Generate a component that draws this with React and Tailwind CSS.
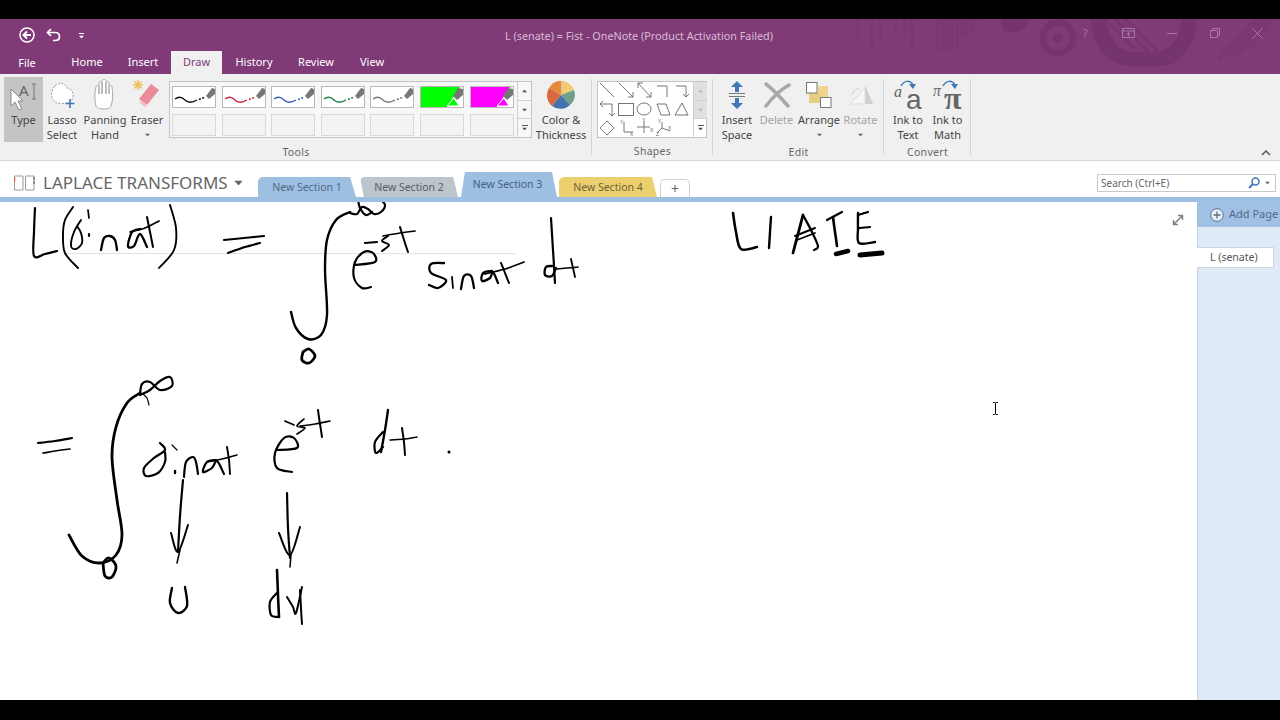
import React from "react";

const smooth = (p) => {
  let d = `M${p[0][0]} ${p[0][1]}`;
  for (let i = 0; i < p.length - 1; i++) {
    const a = p[i - 1] || p[i], b = p[i], c = p[i + 1], e = p[i + 2] || c;
    d += `C${(b[0] + (c[0] - a[0]) / 6).toFixed(1)} ${(b[1] + (c[1] - a[1]) / 6).toFixed(1)} ${(c[0] - (e[0] - b[0]) / 6).toFixed(1)} ${(c[1] - (e[1] - b[1]) / 6).toFixed(1)} ${c[0]} ${c[1]}`;
  }
  return d;
};

const strokes = [
  // L(sin at)
  [2.2, [[35,208],[34,232],[34,256],[45,254],[57,251]]],
  [1.9, [[73,207],[65,220],[63,235],[65,253],[78,268]]],
  [1.9, [[81,220],[74,232],[71,246],[76,249],[82,243],[81,233],[77,226]]],
  [1.7, [[88,210],[89,218]]], [2.2, [[89,234],[89,236]]],
  [2.3, [[101,250],[104,238],[110,236],[115,240],[117,250]]],
  [2.3, [[140,229],[132,232],[128,246],[134,246],[140,234],[147,247]]],
  [2, [[147,217],[150,232],[153,247]]], [1.7, [[130,232],[145,228],[159,221]]],
  [1.9, [[170,205],[176,228],[174,250],[159,268]]],
  [2.2, [[224,240],[244,238],[264,236]]], [2.2, [[228,253],[245,247],[260,243]]],
  // integral 1
  [2.4, [[350,212],[336,220],[327,240],[325,270],[327,315],[321,335],[308,339],[296,328],[291,312]]],
  [2.2, [[350,213],[357,214],[362,207],[368,209],[374,214],[381,212],[385,205],[380,199]]],
  [2.2, [[358,200],[360,208],[366,215],[372,212]]],
  [2.8, [[303,352],[309,349],[315,356],[309,363],[302,360],[303,352]]],
  // e -st
  [2.2, [[354,265],[375,262],[373,253],[364,252],[355,262],[354,278],[362,288],[371,287]]],
  [2.2, [[365,243],[377,242]]],
  [2, [[388,236],[382,241],[389,245],[382,251]]],
  [2, [[400,227],[404,240],[408,252]]], [1.7, [[383,236],[400,233],[415,231]]],
  // sin at
  [2.3, [[444,263],[431,264],[431,273],[446,280],[438,288],[429,285]]],
  [1.8, [[452,277],[453,288]]],
  [2.3, [[461,289],[464,276],[471,276],[474,288]]],
  [2.3, [[492,271],[483,273],[482,281],[490,278],[493,272],[498,283]]],
  [2, [[501,263],[505,273],[509,283]]], [1.7, [[484,274],[505,269],[524,262]]],
  // dt
  [2.2, [[551,218],[553,250],[555,283]]],
  [2.3, [[553,266],[546,267],[545,275],[552,276],[556,268]]],
  [1.8, [[571,259],[573,268],[575,277]]], [1.6, [[557,269],[567,268],[578,267]]],
  // LIATE
  [2.6, [[733,213],[736,232],[741,249],[757,247]]],
  [2.4, [[771,217],[770,232],[769,248]]],
  [2.8, [[803,215],[798,234],[793,253]]], [2.2, [[803,215],[811,230],[818,246],[814,250]]], [1.9, [[795,236],[815,228]]], [1.7, [[797,240],[815,233]]],
  [2.2, [[827,220],[842,212]]], [2.6, [[833,217],[835,232],[837,246]]],
  [4.5, [[836,254],[848,251]]],
  [2.4, [[858,213],[858,228],[859,243],[875,242]]], [2.2, [[858,215],[868,212]]], [2.2, [[859,228],[870,227]]],
  [5, [[860,255],[882,253]]],
  // second row =
  [2.2, [[38,443],[55,441],[72,438]]], [1.7, [[43,453],[55,451],[70,449]]],
  // integral 2
  [2.8, [[140,393],[127,403],[116,427],[112,457],[117,500],[122,535],[116,555],[100,563],[82,556],[69,535]]],
  [2.2, [[140,395],[142,384],[150,382],[160,390],[172,386],[170,377],[160,381],[150,390],[140,395]]],
  [1.2, [[143,394],[147,398],[149,405]]],
  [2.8, [[103,563],[109,558],[116,566],[112,577],[105,576],[103,563]]],
  // S in at
  [2.2, [[160,443],[165,450],[154,458],[144,468],[146,476],[158,473],[165,462],[165,452]]],
  [1.2, [[172,445],[177,450]]], [2.4, [[175,471],[175,473]]],
  [2.2, [[184,477],[186,462],[193,457],[196,462],[198,474]]],
  [2.2, [[216,460],[207,462],[203,472],[212,468],[217,461],[224,474]]],
  [1.9, [[227,447],[229,460],[230,474]]], [1.5, [[207,462],[222,459],[237,455]]],
  // arrow 1
  [2.2, [[183,480],[180,516],[178,552]]], [2, [[171,533],[178,552],[188,525]]], [1.5, [[180,550],[177,563]]],
  // e -st 2
  [2.2, [[277,450],[297,448],[294,438],[284,438],[275,453],[277,468],[292,472]]],
  [1.7, [[285,421],[294,425]]],
  [1.7, [[304,419],[297,426],[305,428],[297,434]]],
  [2, [[318,410],[320,424],[322,437]]], [1.6, [[300,426],[315,424],[330,421]]],
  // dt 2
  [2.4, [[388,410],[385,430],[381,452]]],
  [2.2, [[383,432],[375,442],[376,453],[383,447]]],
  [2, [[402,428],[404,442],[405,455]]], [1.5, [[390,440],[405,439],[417,437]]],
  // arrow 2
  [2.2, [[287,493],[288,528],[290,558]]], [2, [[279,533],[290,555],[300,527]]], [1.5, [[291,555],[290,567]]],
  // u dv
  [2.4, [[172,588],[170,603],[178,613],[187,606],[185,587]]],
  [2.6, [[277,570],[278,595],[279,617]]],
  [2.2, [[277,593],[270,602],[271,615],[278,617]]],
  [2, [[287,597],[293,607],[296,613],[302,587]]],
  [2, [[300,590],[301,608],[302,624]]],
];

const Caret = ({ className = "" }) => <svg width="7" height="4" viewBox="0 0 7 4" className={className}><path d="M0 0h7L3.5 4z" fill="currentColor" /></svg>;

const Big = ({ w, icon, lines, caret, dim, active }) => (
  <div className={`flex flex-col items-center h-[65px] shrink-0 ${active ? "bg-[#c4c4c4]" : ""} ${dim ? "text-[#a4a4a4]" : "text-[#444444]"}`} style={{ width: w }}>
    <div className="h-[35px] w-full flex items-center justify-center">{icon}</div>
    {lines.map((l) => <div key={l} className="text-[11px] leading-[15px] whitespace-nowrap">{l}</div>)}
    {caret && <Caret className="mt-[6px] scale-75 text-[#666666]" />}
  </div>
);

const Group = ({ w, label, children }) => (
  <div className="relative flex flex-col h-full shrink-0" style={{ width: w }}>
    <div className="flex pt-[3px] h-[70px]">{children}</div>
    <div className="flex-1 flex items-center justify-center text-[10.5px] text-[#666666] tracking-[0.3px] pt-[3px]">{label}</div>
    <div className="absolute right-0 top-[5px] bottom-[5px] w-px bg-[#d4d4d4]" />
  </div>
);

const Pen = ({ c }) => (
  <div className="w-[44px] h-[22px] bg-white border border-[#b8b8b8]">
    <svg width="42" height="20" viewBox="0 0 42 20">
      <path d="M2 12c4-3 7-2 10 1s7 3 12 0" fill="none" stroke={c} strokeWidth="1.4" />
      <path d="M26 12.5l5-2" stroke={c} strokeWidth="1.6" strokeDasharray="2 1.5" />
      <path d="M33 9l6-8 3 1v5l-6 5z" fill="#777777" />
    </svg>
  </div>
);
const High = ({ c }) => (
  <div className="w-[44px] h-[22px] bg-white border border-[#b8b8b8]">
    <svg width="42" height="20" viewBox="0 0 42 20">
      <path d="M0 0h39L26 20H0z" fill={c} />
      <path d="M26 19l7-8 5 8z" fill={c} stroke="#ffffff" strokeWidth="1" />
      <path d="M32 9l5-8 5 1v6l-6 5z" fill="#777777" />
    </svg>
  </div>
);
const Empty = () => <div className="w-[44px] h-[22px] bg-[#f3f3f3] border border-[#d8d8d8]" />;

const Scroll = ({ dim }) => (
  <div className="w-[14px] h-full border-l border-[#d0d0d0] flex flex-col shrink-0">
    <div className={`flex-1 flex items-center justify-center ${dim ? "bg-[#e0e0e0] text-[#bbbbbb]" : "text-[#555555]"}`}><Caret className="rotate-180 scale-75" /></div>
    <div className={`flex-1 flex items-center justify-center border-t border-[#d0d0d0] ${dim ? "bg-[#e0e0e0] text-[#bbbbbb]" : "text-[#555555]"}`}><Caret className="scale-75" /></div>
    <div className="flex-1 flex flex-col gap-[1px] items-center justify-center border-t border-[#d0d0d0] text-[#555555]"><div className="w-[6px] h-px bg-[#555555]" /><Caret className="scale-75" /></div>
  </div>
);

const Shapes = () => (
  <svg width="95" height="55" viewBox="598 82 95 55" fill="none" stroke="#666666" strokeWidth="0.9">
    <path d="M600 83l14 14" />
    <path d="M619 83l14 14M633 97v-5M633 97h-5" />
    <path d="M638 83l13 14M638 83v5M638 83h5M651 97v-5M651 97h-5" />
    <path d="M657 86h10v11" />
    <path d="M676 86h10v11M686 97l-3-3M686 97l3-3" />
    <path d="M600 104h12v12M600 104l3-3M600 104l3 3M612 116l-3-3M612 116l3-3" />
    <rect x="618.5" y="103.5" width="15" height="12" />
    <ellipse cx="644" cy="109" rx="7" ry="6" />
    <path d="M657 104h9l4 11h-9z" />
    <path d="M675 115l7-12 6 12z" />
    <path d="M607 121l7 7-7 7-7-7z" />
    <path d="M624 122v10h9" />
    <path d="M644 121v12M637 127h13" />
    <path d="M662 122v6l-5 5M662 128l8 3" />
    <g fill="#666666" stroke="none" fontSize="5" fontFamily="Liberation Sans">
      <text x="620" y="124">Y</text><text x="630" y="136">X</text>
      <text x="642" y="122">Y</text><text x="650" y="132">X</text>
      <text x="658" y="123">Y</text><text x="668" y="130">X</text><text x="656" y="136">Z</text>
    </g>
  </svg>
);

const Decor = () => (
  <svg className="absolute inset-0" width="1280" height="55" viewBox="0 19 1280 55" fill="none" stroke="#7a3772">
    <g strokeWidth="3">
      <path d="M858 19v18M872 19v28M880 19v22M896 19v14M905 19v18M912 19v28M938 19v33M943 19v33M948 19v33M952 19v30M957 19v26M962 19v20M966 19v16M972 19v12M976 19v10" />
    </g>
    <circle cx="1058" cy="38" r="15" strokeWidth="7" stroke="#75346f" />
    <circle cx="1058" cy="38" r="5" fill="#75346f" stroke="none" />
    <path d="M1001 19c0 14 5 13 13 13s14-5 14-13z" fill="#75346f" stroke="none" />
    <path d="M1091 19c1 25 14 47 40 47h30c20 0 34-20 36-47h-15c-2 18-10 33-28 33h-20c-16 0-26-16-28-33z" fill="#75346f" stroke="none" />
    <path d="M1115 19l34 33M1125 19l34 33M1105 19l30 30" strokeWidth="2" stroke="#75346f" />
    <path d="M1218 60l38-41M1228 58l32-39M1238 54l28-35M1248 50l24-31" strokeWidth="3.5" />
  </svg>
);

export default function App() {
  const tabs = [["Home", 56], ["Insert", 56]];
  const tabs2 = [["History", 64], ["Review", 60], ["View", 52]];
  return (
    <div className="w-[1280px] h-[720px] bg-black flex flex-col overflow-hidden [font-family:'Noto_Sans',sans-serif]">
      <div className="h-[19px] shrink-0 bg-black" />
      {/* title bar */}
      <div className="relative h-[55px] shrink-0 bg-[#803a78] overflow-hidden">
        <Decor />
        <div className="relative h-[32px] flex items-center">
          <svg className="ml-[19px]" width="16" height="16" viewBox="0 0 16 16" fill="none" stroke="#ffffff" strokeWidth="1.5">
            <circle cx="8" cy="8" r="7" />
            <path d="M12 8H5M8 4.5L4.5 8 8 11.5" strokeWidth="2" />
          </svg>
          <svg className="ml-[11px]" width="15" height="14" viewBox="0 0 15 14" fill="none" stroke="#ffffff" strokeWidth="1.7">
            <path d="M5 1L1.5 4.5 5 8" /><path d="M2 4.5h7c6 0 6 8 0 8H7" />
          </svg>
          <div className="ml-[17px] mt-[2px] flex flex-col items-center gap-[1px] text-white"><div className="w-[5px] h-px bg-white" /><Caret className="scale-75" /></div>
          <div className="absolute left-0 right-[2px] top-[11px] text-center text-[10.8px] leading-[12px] text-[#d8bcd5]">L (senate) = Fist - OneNote (Product Activation Failed)</div>
          <div className="absolute top-[7px] left-[1064px] flex items-center text-[#a678a1]">
            <div className="w-[43px] text-center text-[11px] leading-[14px]">?</div>
            <div className="w-[43px] flex justify-center"><svg width="13" height="10" viewBox="0 0 13 10" fill="none" stroke="currentColor"><path d="M.5.5h12v9H.5zM.5 3h12M6.5 8V4.5M5 6l1.5-1.5L8 6" /></svg></div>
            <div className="w-[43px] flex justify-center"><div className="w-[10px] h-px bg-current" /></div>
            <div className="w-[43px] flex justify-center"><svg width="10" height="10" viewBox="0 0 10 10" fill="none" stroke="currentColor"><path d="M2.5 2.5V.5h7v7h-2M.5 2.5h7v7h-7z" /></svg></div>
            <div className="w-[43px] flex justify-center"><svg width="11" height="11" viewBox="0 0 11 11" stroke="currentColor"><path d="M.5.5l10 10M10.5.5l-10 10" /></svg></div>
          </div>
        </div>
        <div className="relative h-[23px] flex text-[11px] text-white">
          <div className="w-[54px] flex items-center justify-center mt-[1px]">File</div>
          <div className="w-[5px]" />
          {tabs.map(([t, w]) => <div key={t} className="flex items-center justify-center" style={{ width: w }}>{t}</div>)}
          <div className="w-[51px] bg-[#f0f0f0] text-[#803a78] flex items-center justify-center">Draw</div>
          {tabs2.map(([t, w]) => <div key={t} className="flex items-center justify-center" style={{ width: w }}>{t}</div>)}
        </div>
      </div>
      {/* ribbon */}
      <div className="relative h-[87px] shrink-0 bg-[#f0f0f0] border-b border-[#d6d6d6] flex">
        <Group w={592} label="Tools">
          <div className="w-[4px] shrink-0" />
          <Big w={39} active lines={["Type"]} icon={
            <svg width="39" height="35" viewBox="0 0 39 35">
              <text x="15" y="19" fontSize="15" fill="#666666" fontFamily="Noto Sans">A</text>
              <path d="M28 7h4M30 7v15M28 22h4" stroke="#777777" fill="none" />
              <path d="M7 12v17l4-4 4 8 3-1-4-8h5z" fill="#ffffff" stroke="#8a8a8a" />
            </svg>} />
          <Big w={38} lines={["Lasso", "Select"]} icon={
            <svg width="30" height="30" viewBox="0 0 30 30" fill="none">
              <path d="M8 6c5-5 11-2 12 2 6 1 8 8 4 13-3 3-10 3-14 2-7-3-7-12-2-17z" fill="#ffffff" stroke="#999999" strokeDasharray="2 1.5" />
              <path d="M23 19v9M18.5 23.500h9" stroke="#3f78b8" strokeWidth="1.6" />
            </svg>} />
          <Big w={48} lines={["Panning", "Hand"]} icon={
            <svg width="24" height="32" viewBox="0 0 24 32" fill="#ffffff" stroke="#a8a8a8">
              <path d="M3 27C1 20 2 11 3 8c0-2 3-2 3 0v7-11c0-2 3-2 3 0v11V2c0-2 4-2 4 0v13-11c0-2 3-2 3 0v11-7c0-2 3-2 3 0 1 6 1 14-1 19-1 2-2 3-7 3s-7-1-8-3z" />
            </svg>} />
          <Big w={36} caret lines={["Eraser"]} icon={
            <svg width="30" height="32" viewBox="0 0 30 32">
              <path d="M6 1v10M1 6h10M2.500 2.500l7 7M9.500 2.500l-7 7" stroke="#ecc45a" strokeWidth="1.5" />
              <circle cx="6" cy="6" r="2.600" fill="#ecc45a" />
              <path d="M19 5l8 6-12 15-8-6z" fill="#ea8a9a" />
              <path d="M9 22l6 5-2 1-6-5z" fill="#f1b5c0" />
            </svg>} />
          <div className="w-[4px] shrink-0" />
          <div className="w-[363px] h-[57px] mt-[4px] border border-[#c4c4c4] bg-[#f7f7f7] flex shrink-0">
            <div className="flex-1 grid grid-cols-[repeat(7,44px)] gap-x-[5.600px] gap-y-[6px] pl-[2px] pt-[4px] content-start">
              <Pen c="#111111" /><Pen c="#c8283c" /><Pen c="#3a5fb0" /><Pen c="#1f8048" /><Pen c="#777777" /><High c="#00ff00" /><High c="#ff00ff" />
              <Empty /><Empty /><Empty /><Empty /><Empty /><Empty /><Empty />
            </div>
            <Scroll />
          </div>
          <Big w={58} lines={["Color &", "Thickness"]} icon={
            <svg width="30" height="30" viewBox="0 0 30 30">
              <path d="M15 15V1h-2A14 14 0 0 0 3 8z" fill="#e58a3d" />
              <path d="M15 15V1h3l-1 14z" fill="#f0b8a0" />
              <path d="M15 15l2-14a14 14 0 0 1 11 9z" fill="#eecb74" />
              <path d="M15 15l13-5a14 14 0 0 1-4 15z" fill="#6fa08c" />
              <path d="M15 15l9 10a14 14 0 0 1-18 1z" fill="#4472ad" />
              <path d="M15 15l-9 11A14 14 0 0 1 3 8z" fill="#d8683e" />
            </svg>} />
        </Group>
        <Group w={121} label="Shapes">
          <div className="w-[5px] shrink-0" />
          <div className="w-[110px] h-[57px] mt-[4px] border border-[#c4c4c4] bg-white flex shrink-0">
            <div className="flex-1"><Shapes /></div>
            <Scroll dim />
          </div>
        </Group>
        <Group w={171} label="Edit">
          <div className="w-[4px] shrink-0" />
          <Big w={40} lines={["Insert", "Space"]} icon={
            <svg width="18" height="30" viewBox="0 0 18 30" fill="#3f78b8">
              <path d="M9 1l6 6h-4v5H7V7H3z" /><path d="M9 29l-6-6h4v-5h4v5h4z" />
              <path d="M1 13.500h16M1 16.500h16" stroke="#777777" />
            </svg>} />
          <Big w={39} dim lines={["Delete"]} icon={
            <svg width="28" height="26" viewBox="0 0 28 26" fill="none" stroke="#a8a8a8" strokeWidth="3.500" strokeLinecap="round">
              <path d="M3 2c8 6 15 14 22 22" /><path d="M26 3C17 8 9 16 3 24" />
            </svg>} />
          <Big w={46} caret lines={["Arrange"]} icon={
            <svg width="28" height="28" viewBox="0 0 28 28">
              <rect x="13" y="5" width="10" height="11" fill="#f0d58c" />
              <rect x="4" y="12" width="11" height="10" fill="#e8cc80" />
              <rect x="1.500" y="1.500" width="10.500" height="10.500" fill="#ffffff" stroke="#777777" />
              <rect x="15.500" y="16.500" width="10.500" height="10" fill="#ffffff" stroke="#777777" />
            </svg>} />
          <Big w={37} dim caret lines={["Rotate"]} icon={
            <svg width="26" height="22" viewBox="0 0 26 22" fill="none">
              <path d="M17 1l8 19h-8z" fill="#cfcfcf" /><path d="M2 20h15V4z" stroke="#dddddd" fill="#f6f6f6" />
              <path d="M4 11c1-5 5-7 8-6" stroke="#dddddd" strokeWidth="1.500" />
            </svg>} />
        </Group>
        <Group w={87} label="Convert">
          <div className="w-[4px] shrink-0" />
          <Big w={40} lines={["Ink to", "Text"]} icon={
            <svg className="overflow-visible" width="30" height="34" viewBox="0 0 30 34">
              <path d="M8 8c3-6 9-6 12-1" fill="none" stroke="#3f78b8" strokeWidth="1.500" /><path d="M16 6l7 0-3 5z" fill="#3f78b8" />
              <text x="1" y="19" fontSize="16" fontStyle="italic" fill="#666666" fontFamily="Liberation Serif">a</text>
              <text x="13" y="31" fontSize="28" fill="#666666" fontFamily="Liberation Sans">a</text>
            </svg>} />
          <Big w={39} lines={["Ink to", "Math"]} icon={
            <svg className="overflow-visible" width="32" height="34" viewBox="0 0 32 34">
              <path d="M11 8c3-6 9-6 12-1" fill="none" stroke="#3f78b8" strokeWidth="1.500" /><path d="M19 6l7 0-3 5z" fill="#3f78b8" />
              <text x="1" y="18" fontSize="16" fontStyle="italic" fill="#666666" fontFamily="Liberation Serif">π</text>
              <text x="12" y="31" fontSize="32" fontWeight="700" fill="#666666" fontFamily="Liberation Serif">π</text>
            </svg>} />
        </Group>
        <svg className="absolute right-[9px] bottom-[4px]" width="10" height="6" viewBox="0 0 10 6" fill="none" stroke="#555555" strokeWidth="1.500"><path d="M1 5l4-4 4 4" /></svg>
      </div>
      {/* notebook row */}
      <div className="h-[36px] shrink-0 bg-white flex items-end">
        <div className="w-[258px] h-full flex items-center shrink-0 pl-[14px] pt-[8px] text-[#666666]">
          <svg className="shrink-0" width="21" height="16" viewBox="0 0 21 16" fill="none" stroke="#9a9a9a">
            <path d="M.5 1h8.500v14H.5zM11.500 1H20v14h-8.500z" />
            <path d="M.5 2v5" stroke="#d8683e" strokeWidth="1.500" /><path d="M20 2v3M20 6v3" stroke="#555555" />
          </svg>
          <span className="ml-[8px] text-[17px] leading-[20px] whitespace-nowrap">LAPLACE TRANSFORMS</span>
          <Caret className="ml-[7px] shrink-0 scale-125" />
        </div>
        <div className="w-[98px] h-[20px] rounded-t-[5px] bg-[#9dbfe2] text-[#4f6a86] text-[10.500px] pt-[1px] flex items-center justify-center [clip-path:polygon(0_100%,0_0,94%_0,100%_100%)]">New Section 1</div>
        <div className="w-[4px]" />
        <div className="w-[98px] h-[20px] rounded-t-[5px] bg-[#bcc5c9] text-[#55606a] text-[10.500px] pt-[1px] flex items-center justify-center [clip-path:polygon(0_0,95%_0,100%_100%,4%_100%)]">New Section 2</div>
        <div className="w-[99px] h-[25px] rounded-t-[5px] bg-[#9dbfe2] text-[#47627e] text-[10.500px] flex items-center justify-center [clip-path:polygon(3%_100%,7%_0,95%_0,100%_100%)]">New Section 3</div>
        <div className="w-[2px]" />
        <div className="w-[98px] h-[20px] rounded-t-[5px] bg-[#ecd06f] text-[#6e6238] text-[10.500px] pt-[1px] flex items-center justify-center [clip-path:polygon(0_0,95%_0,100%_100%,0_100%)]">New Section 4</div>
        <div className="w-[3px]" />
        <div className="w-[30px] h-[18px] rounded-t-[5px] border border-b-0 border-[#d0d0d0] text-[#666666] text-[14px] leading-[12px] flex items-center justify-center">+</div>
        <div className="ml-[407px] mb-[5px] w-[179px] h-[18px] border border-[#c8c8c8] bg-white flex items-center text-[10px] text-[#666666] pl-[3px] shrink-0">
          <span>Search (Ctrl+E)</span>
          <svg className="ml-auto" width="12" height="12" viewBox="0 0 12 12" fill="none" stroke="#3f78b8" strokeWidth="1.500"><circle cx="7.500" cy="4.500" r="3.500" /><path d="M5 7l-4 4" strokeWidth="2" /></svg>
          <Caret className="ml-[4px] mr-[4px] scale-75" />
        </div>
      </div>
      <div className="h-[5px] shrink-0 bg-[#9dbfe2]" />
      {/* content */}
      <div className="flex-1 flex min-h-0">
        <div className="relative flex-1 bg-white overflow-hidden">
          <svg className="absolute inset-0" width="1197" height="498" viewBox="0 202 1197 498" fill="none" stroke="#000000" strokeLinecap="round" strokeLinejoin="round">
            <path d="M65 253.500h450" stroke="#e2e2e2" />
            {strokes.map(([w, p], i) => <path key={i} d={smooth(p)} strokeWidth={w} />)}
            <circle cx="449" cy="452" r="1.500" fill="#000000" stroke="none" />
            <path d="M1174 224l8-8M1178 215.500h4.500v4.500M1173.500 220v4.500h4.500" stroke="#808080" strokeWidth="1.500" strokeLinecap="butt" />
            <path d="M993 402.500h1.500c.6 0 1 .3 1 1v10c0 .7.4 1 1 1H998M998 402.500h-1.500c-.6 0-1 .3-1 1M993 414.500h1.500c.6 0 1-.3 1-1" stroke="#000000" strokeWidth="1" strokeLinecap="butt" />
          </svg>
        </div>
        <div className="w-[83px] shrink-0 bg-[#deeaf5] flex flex-col border-l border-[#c8d4e0]">
          <div className="h-[25px] bg-[#a0c1e4] -ml-px flex items-center pl-[13px] text-[11px] text-[#4f6a86] whitespace-nowrap overflow-hidden">
            <svg className="shrink-0" width="14" height="14" viewBox="0 0 14 14" fill="none" stroke="#5a6f85"><circle cx="7" cy="7" r="6.300" fill="#e6eff8" /><path d="M7 3.500v7M3.500 7h7" strokeWidth="1.300" /></svg>
            <span className="ml-[5px]">Add Page</span>
          </div>
          <div className="mt-[20px] -ml-px w-[77px] h-[21px] bg-white border border-l-0 border-[#c8d4e0] flex items-center pl-[13px] text-[10.500px] text-[#555555]">L (senate)</div>
        </div>
      </div>
      <div className="h-[20px] shrink-0 bg-black" />
    </div>
  );
}
